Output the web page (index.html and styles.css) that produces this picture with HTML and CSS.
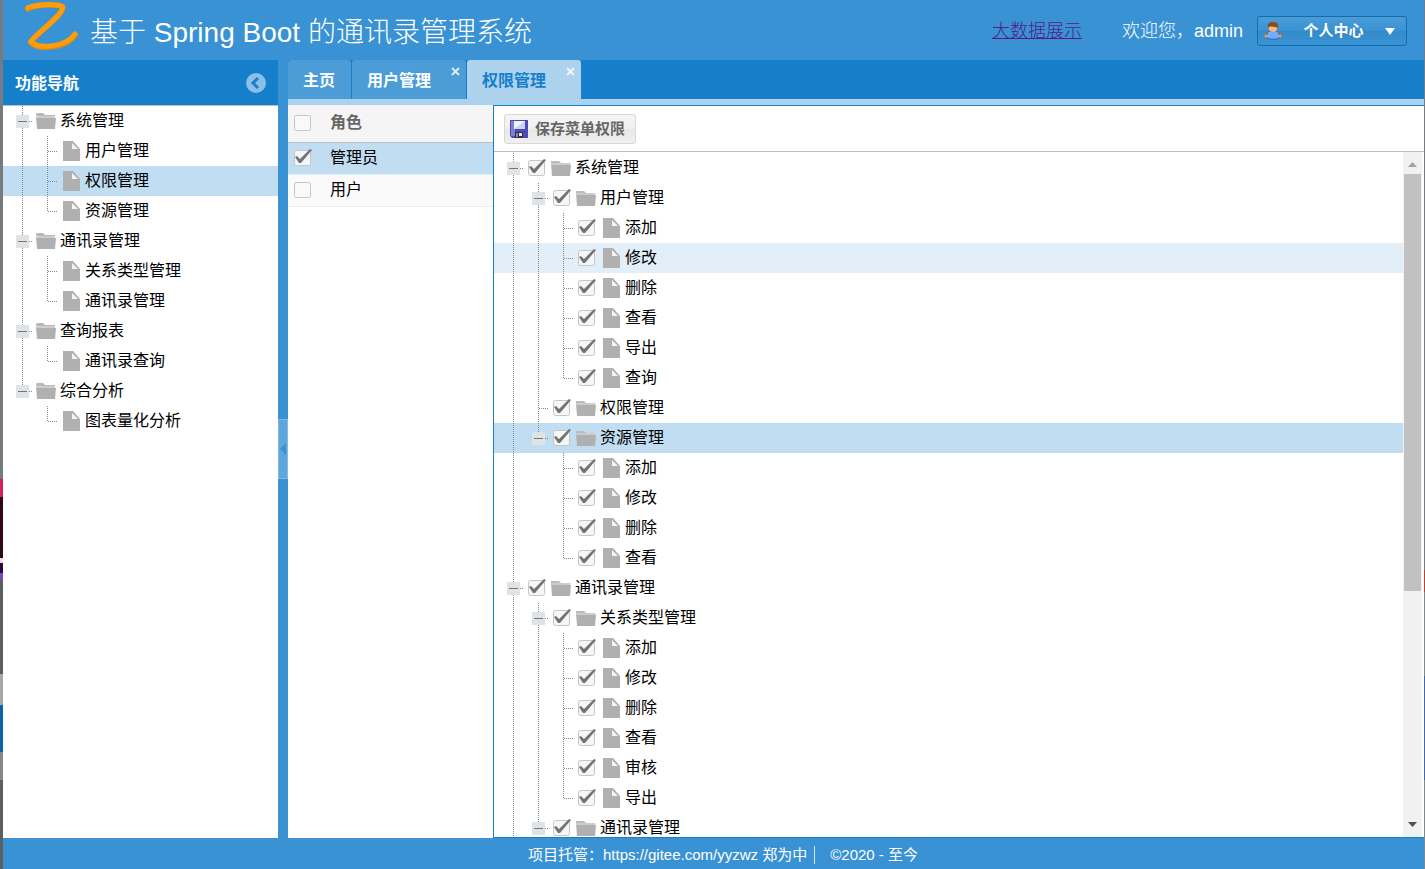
FILE: index.html
```html
<!DOCTYPE html>
<html lang="zh-CN">
<head>
<meta charset="utf-8">
<title>基于 Spring Boot 的通讯录管理系统</title>
<link rel="stylesheet" href="styles.css">
</head>
<body>
<svg class="sprite" aria-hidden="true">
  <symbol id="folder" viewBox="0 0 20 16"><path d="M0 1h8l2 2h9v2H0z" fill="#bcbcbc"/><path d="M0 3l1 2h19l-1 11H1z" fill="#b0b0b0"/><path d="M0 4h20" stroke="#dcdcdc"/></symbol>
  <symbol id="folder-open" viewBox="0 0 20 16"><path d="M0 1l1-1h6l2 2h10v4H4L0 3z" fill="#b8b8b8"/><path d="M0 3l3 1h16" stroke="#e4e4e4" fill="none"/><path d="M0 4l4 1h16l-1 11H1z" fill="#b0b0b0"/></symbol>
  <symbol id="file" viewBox="0 0 17 20"><path d="M0 0h10l7 8v12H0z" fill="#b0b0b0"/><path d="M9 2v6h6z" fill="#f4f4f4"/></symbol>
</svg>
<div class="app">
  <header class="top">
    <svg class="logo" viewBox="0 0 58 54" role="img" aria-label="Z"><path d="M5 8C12 4 33 2 41 6C43 14 12 35 8 43C17 52 46 48 54 35" fill="none" stroke="#d98a1c" stroke-width="6" stroke-linecap="round" stroke-linejoin="round"/><path d="M5 7C12 4 33 2 41 6C43 14 12 35 8 42C17 51 46 47 54 34" fill="none" stroke="#ff9c0a" stroke-width="5" stroke-linecap="round" stroke-linejoin="round"/></svg>
    <h1>基于 Spring Boot 的通讯录管理系统</h1>
    <a href="#">大数据展示</a>
    <span class="welcome">欢迎您，admin</span>
    <button class="profile" type="button">
      <svg width="18" height="18" viewBox="0 0 18 18"><path d="M0 14c0-4 4-6 9-6s9 2 9 6l-2 2H2z" fill="#a5714f"/><path d="M4 9h10l2 6c-2 3-12 3-14 0z" fill="#6fadf8" stroke="#2d62bd"/><circle cx="2" cy="14" r="1.500" fill="#d8a174"/><circle cx="16" cy="14" r="1.500" fill="#d8a174"/><circle cx="9" cy="5.500" r="4.500" fill="#edb98a"/><path d="M4 6C3 1 6 0 9 0s6 1 5 6c-2-1-8-3-10 0z" fill="#8a4b1d"/></svg>
      <span>个人中心</span>
      <svg width="10" height="7" viewBox="0 0 10 7"><path d="M0 0h10L5 7z" fill="#fff"/></svg>
    </button>
  </header>

  <div class="main">
    <aside class="side">
      <div class="side-head"><h2>功能导航</h2>
        <button type="button" aria-label="收起"><svg width="20" height="20" viewBox="0 0 20 20"><circle cx="10" cy="10" r="10" fill="#8bbfe5"/><path d="M12 5l-5 5 5 5" fill="none" stroke="#157fcc" stroke-width="3"/></svg></button>
      </div>
      <div class="tree">
        <div class="row"><i class="minus line"></i><svg class="open"><use href="#folder-open"/></svg>系统管理</div>
        <div class="row"><i class="line"></i><i class="line stub"></i><svg class="file"><use href="#file"/></svg>用户管理</div>
        <div class="row selected"><i class="line"></i><i class="line stub"></i><svg class="file"><use href="#file"/></svg>权限管理</div>
        <div class="row"><i class="line"></i><i class="last stub"></i><svg class="file"><use href="#file"/></svg>资源管理</div>
        <div class="row"><i class="minus line"></i><svg class="open"><use href="#folder-open"/></svg>通讯录管理</div>
        <div class="row"><i class="line"></i><i class="line stub"></i><svg class="file"><use href="#file"/></svg>关系类型管理</div>
        <div class="row"><i class="line"></i><i class="last stub"></i><svg class="file"><use href="#file"/></svg>通讯录管理</div>
        <div class="row"><i class="minus line"></i><svg class="open"><use href="#folder-open"/></svg>查询报表</div>
        <div class="row"><i class="line"></i><i class="last stub"></i><svg class="file"><use href="#file"/></svg>通讯录查询</div>
        <div class="row"><i class="minus last"></i><svg class="open"><use href="#folder-open"/></svg>综合分析</div>
        <div class="row"><i></i><i class="last stub"></i><svg class="file"><use href="#file"/></svg>图表量化分析</div>
      </div>
    </aside>

    <div class="splitter"><button type="button" aria-label="收起导航"><svg width="6" height="12" viewBox="0 0 6 12"><path d="M6 0v12L0 6z" fill="#3892d4"/></svg></button></div>

    <main class="content">
      <nav class="tabs">
        <button class="tab" type="button">主页</button>
        <button class="tab closable" type="button">用户管理<svg viewBox="0 0 9 9"><path d="M1 1l7 7M8 1L1 8"/></svg></button>
        <button class="tab closable active" type="button">权限管理<svg viewBox="0 0 9 9"><path d="M1 1l7 7M8 1L1 8"/></svg></button>
      </nav>
      <div class="panels">
        <table class="roles">
          <thead><tr><th class="pick"><input type="checkbox" aria-label="全选"></th><th>角色</th></tr></thead>
          <tbody>
            <tr class="selected"><td class="pick"><input type="checkbox" id="role1" checked></td><td><label for="role1">管理员</label></td></tr>
            <tr><td class="pick"><input type="checkbox" id="role2"></td><td><label for="role2">用户</label></td></tr>
          </tbody>
        </table>
        <section class="perms">
          <div class="toolbar"><button class="save" type="button"><svg width="18" height="18" viewBox="0 0 18 18"><path d="M0 0h18v18H2l-2-2z" fill="#4a4ab8"/><path d="M1 1h4v15H1z" fill="#7d80d8"/><path d="M4 1h11v8H4z" fill="#f2f5ff"/><path d="M4 9L15 1v8z" fill="#c9d4f2"/><path d="M5 12h8v6H5z" fill="#303040"/><path d="M9 13h3v3H9z" fill="#e6e6f0"/><path d="M6 13h2v4H6z" fill="#888"/></svg>保存菜单权限</button></div>
          <div class="scroll">
            <div class="tree">
              <label class="row"><i class="minus line"></i><input type="checkbox" checked><svg><use href="#folder"/></svg>系统管理</label>
              <label class="row"><i class="line"></i><i class="minus line"></i><input type="checkbox" checked><svg><use href="#folder"/></svg>用户管理</label>
              <label class="row"><i class="line"></i><i class="line"></i><i class="line stub"></i><input type="checkbox" checked><svg class="file"><use href="#file"/></svg>添加</label>
              <label class="row hover"><i class="line"></i><i class="line"></i><i class="line stub"></i><input type="checkbox" checked><svg class="file"><use href="#file"/></svg>修改</label>
              <label class="row"><i class="line"></i><i class="line"></i><i class="line stub"></i><input type="checkbox" checked><svg class="file"><use href="#file"/></svg>删除</label>
              <label class="row"><i class="line"></i><i class="line"></i><i class="line stub"></i><input type="checkbox" checked><svg class="file"><use href="#file"/></svg>查看</label>
              <label class="row"><i class="line"></i><i class="line"></i><i class="line stub"></i><input type="checkbox" checked><svg class="file"><use href="#file"/></svg>导出</label>
              <label class="row"><i class="line"></i><i class="line"></i><i class="last stub"></i><input type="checkbox" checked><svg class="file"><use href="#file"/></svg>查询</label>
              <label class="row"><i class="line"></i><i class="line stub"></i><input type="checkbox" checked><svg><use href="#folder"/></svg>权限管理</label>
              <label class="row selected"><i class="line"></i><i class="minus last"></i><input type="checkbox" checked><svg><use href="#folder"/></svg>资源管理</label>
              <label class="row"><i class="line"></i><i></i><i class="line stub"></i><input type="checkbox" checked><svg class="file"><use href="#file"/></svg>添加</label>
              <label class="row"><i class="line"></i><i></i><i class="line stub"></i><input type="checkbox" checked><svg class="file"><use href="#file"/></svg>修改</label>
              <label class="row"><i class="line"></i><i></i><i class="line stub"></i><input type="checkbox" checked><svg class="file"><use href="#file"/></svg>删除</label>
              <label class="row"><i class="line"></i><i></i><i class="last stub"></i><input type="checkbox" checked><svg class="file"><use href="#file"/></svg>查看</label>
              <label class="row"><i class="minus line"></i><input type="checkbox" checked><svg><use href="#folder"/></svg>通讯录管理</label>
              <label class="row"><i class="line"></i><i class="minus line"></i><input type="checkbox" checked><svg><use href="#folder"/></svg>关系类型管理</label>
              <label class="row"><i class="line"></i><i class="line"></i><i class="line stub"></i><input type="checkbox" checked><svg class="file"><use href="#file"/></svg>添加</label>
              <label class="row"><i class="line"></i><i class="line"></i><i class="line stub"></i><input type="checkbox" checked><svg class="file"><use href="#file"/></svg>修改</label>
              <label class="row"><i class="line"></i><i class="line"></i><i class="line stub"></i><input type="checkbox" checked><svg class="file"><use href="#file"/></svg>删除</label>
              <label class="row"><i class="line"></i><i class="line"></i><i class="line stub"></i><input type="checkbox" checked><svg class="file"><use href="#file"/></svg>查看</label>
              <label class="row"><i class="line"></i><i class="line"></i><i class="line stub"></i><input type="checkbox" checked><svg class="file"><use href="#file"/></svg>审核</label>
              <label class="row"><i class="line"></i><i class="line"></i><i class="last stub"></i><input type="checkbox" checked><svg class="file"><use href="#file"/></svg>导出</label>
              <label class="row"><i class="line"></i><i class="minus last"></i><input type="checkbox" checked><svg><use href="#folder"/></svg>通讯录管理</label>
            </div>
            <div class="bar">
              <svg width="9" height="5" viewBox="0 0 9 5"><path d="M0 5h9L4.500 0z" fill="#a3a3a3"/></svg>
              <div class="track"><div class="thumb"></div></div>
              <svg width="9" height="5" viewBox="0 0 9 5"><path d="M0 0h9L4.500 5z" fill="#505050"/></svg>
            </div>
          </div>
        </section>
      </div>
    </main>
  </div>

  <footer><span class="host">项目托管：https://gitee.com/yyzwz 郑为中</span><span>©2020 - 至今</span></footer>
</div>
</body>
</html>
```

FILE: styles.css
```css
* { box-sizing: border-box; }

body {
  margin: 0;
  padding: 0 1px 0 3px;
  font: 16px/20px "Liberation Sans", "Noto Sans CJK SC", sans-serif;
  color: #000;
  background:
    linear-gradient(#757b7f 0 570px, #b8412f 570px 592px, #7f8a88 592px 676px, #3f68b0 676px 780px, #7f8a88 780px) right / 1px 100% no-repeat,
    linear-gradient(#757b7f 0 479px, #d81f5c 479px 497px, #2d0618 497px 558px, #e4dfe4 558px 563px, #2b0738 563px 573px, #7d42d8 573px 579px, #59605f 579px 674px, #a4a8ab 674px 705px, #0b63ad 705px 752px, #83888d 752px 780px, #59605f 780px);
}

button { font: inherit; border: 0; padding: 0; background: none; cursor: pointer; }
h1, h2 { margin: 0; }
.sprite { position: absolute; width: 0; height: 0; }

.app { height: 100vh; display: flex; flex-direction: column; background: #3892d4; overflow: hidden; }

.top { height: 60px; flex: none; display: flex; align-items: center; padding: 2px 17px 0 20px; color: #fff; font-size: 18px; }
.logo { width: 56px; height: 52px; margin-bottom: 8px; }
.top h1 { font-size: 28px; line-height: 40px; font-weight: 300; margin: 0 auto 0 11px; padding-top: 4px; }
.top a { color: #551a8b; font-weight: 300; margin-right: 40px; }
.welcome { font-weight: 300; }
.profile {
  width: 150px; height: 30px; margin-left: 14px; padding: 0 11px 0 6px;
  display: flex; align-items: center; justify-content: space-between;
  border: 1px solid #126daf; border-radius: 3px;
  background: linear-gradient(#4b9cd7, #3892d4 50%, #358ac8 50%, #3892d4);
  color: #fff; font-size: 15px; font-weight: 700;
}

.main { flex: 1; min-height: 0; display: flex; }

.side { flex: 0 0 275px; background: #fff; }
.side-head {
  height: 46px; padding: 0 12px; display: flex; align-items: center; justify-content: space-between;
  background: #157fcc; border-bottom: 1px solid #c0c0c0; color: #fff;
}
.side-head h2 { font-size: 16px; padding-top: 2px; }
.side-head button { height: 20px; }

.splitter { flex: 0 0 10px; display: flex; align-items: center; }
.splitter button { width: 10px; height: 60px; background: #5fa7db; border: 1px solid #80bbe6; display: flex; align-items: center; justify-content: center; }

.content { flex: 1; min-width: 0; display: flex; flex-direction: column; }
.tabs { height: 45px; display: flex; gap: 1px; background: #157fcc; border-bottom: 6px solid #add2ed; }
.tab { padding: 2px 16px 0 15px; background: #4b9cd7; color: #fff; font-weight: 700; border-radius: 3px 3px 0 0; position: relative; }
.tab.closable { padding-right: 35px; }
.tab svg { position: absolute; top: 7px; right: 6px; width: 9px; height: 9px; stroke: #dcecf8; stroke-width: 2; }
.tab.active { background: #add2ed; color: #157fcc; }
.tab.active svg { stroke: #eef6fc; }

.panels { flex: 1; min-height: 0; display: flex; align-items: stretch; background: #fff; }
.roles { flex: none; align-self: flex-start; width: 205px; border-collapse: collapse; table-layout: fixed; }
.roles th, .roles td { padding: 0 6px; text-align: left; height: 32px; }
.roles th { height: 37px; background: #f5f5f5; color: #666; border-bottom: 1px solid #c0c0c0; }
.roles td { background: #fafafa; border-bottom: 1px solid #ededed; }
.roles .selected td { background: #c1ddf1; border-bottom-color: #e2eff8; }
.roles .pick { width: 36px; padding-right: 0; }

input[type="checkbox"] {
  appearance: none; flex: none; display: block; width: 18px; height: 18px; margin: 0;
  background: url("data:image/svg+xml,%3Csvg xmlns='http://www.w3.org/2000/svg' viewBox='0 0 18 18'%3E%3Crect x='.5' y='1.5' width='16' height='15' rx='2' fill='%23f9f9f9' stroke='%23c6c6c6'/%3E%3C/svg%3E");
}
input[type="checkbox"]:checked {
  background: url("data:image/svg+xml,%3Csvg xmlns='http://www.w3.org/2000/svg' viewBox='0 0 18 18'%3E%3Crect x='.5' y='1.5' width='16' height='15' rx='2' fill='%23f6f6f6' stroke='%23c6c6c6'/%3E%3Cpath d='M1 8l2-1 3 3 10-10 2 1L7 14H5z' fill='%23737373'/%3E%3C/svg%3E");
}

.perms { flex: 1; min-width: 0; display: flex; flex-direction: column; border: 1px solid #157fcc; border-right: 0; }
.toolbar { flex: none; height: 46px; padding: 8px 10px; border-bottom: 1px solid #c0c0c0; }
.save {
  height: 30px; padding: 0 10px 0 5px; display: flex; align-items: center; gap: 7px;
  border: 1px solid #d8d8d8; border-radius: 3px;
  background: linear-gradient(#f6f6f6, #f0f0f0 50%, #e8e8e8 50%, #f0f0f0);
  color: #666; font-size: 15px; font-weight: 700;
}
.scroll { flex: 1; min-height: 0; display: flex; overflow: hidden; }
.scroll .tree { flex: 1; padding-top: 1px; }

.row { display: flex; align-items: center; height: 30px; padding-left: 7px; line-height: 30px; }
.row.selected { background: #c1ddf1; }
.row.hover { background: #e2eff8; }
.row i {
  flex: none; width: 25px; height: 30px;
  --v: repeating-linear-gradient(#888 0 1px, transparent 1px 2px);
  --h: repeating-linear-gradient(90deg, #888 0 1px, transparent 1px 2px);
  --dash: linear-gradient(#777, #777);
  --box: linear-gradient(#dfe3e6, #dfe3e6);
  background-repeat: no-repeat;
}
.row .line { background-image: var(--v); background-size: 1px 30px; background-position: 12px 0; }
.row .last { background-image: var(--v); background-size: 1px 16px; background-position: 12px 0; }
.row .stub { background-image: var(--v), var(--h); background-size: 1px 30px, 10px 1px; background-position: 12px 0, 13px 15px; }
.row .stub.last { background-size: 1px 16px, 10px 1px; }
.row .minus { background-image: var(--dash), var(--box), var(--v), var(--h); background-size: 9px 1px, 13px 13px, 1px 30px, 4px 1px; background-position: 8px 15px, 6px 9px, 12px 0, 19px 15px; }
.row .minus.last { background-size: 9px 1px, 13px 13px, 1px 16px, 4px 1px; }
.row input { margin: 0 5px 0 2px; }
.row svg { flex: none; width: 20px; height: 16px; margin-right: 4px; }
.row .open { margin: 0 4px 0 1px; }
.row .file { width: 17px; height: 20px; margin: 0 5px 0 3px; }
.row input + .file { margin-left: 2px; }

.bar { flex: 0 0 21px; padding: 10px 0; display: flex; flex-direction: column; align-items: center; background: #f1f1f1; border-right: 2px solid #fff; }
.track { flex: 1; width: 17px; margin: 7px 0; }
.thumb { height: 65%; background: #c1c1c1; }

footer { flex: none; height: 31px; display: flex; align-items: center; justify-content: center; gap: 15px; padding: 2px 0 0 19px; color: #fff; font-size: 15px; line-height: 18px; }
.host { padding-right: 7px; border-right: 1px solid #d5e7f5; }
```
